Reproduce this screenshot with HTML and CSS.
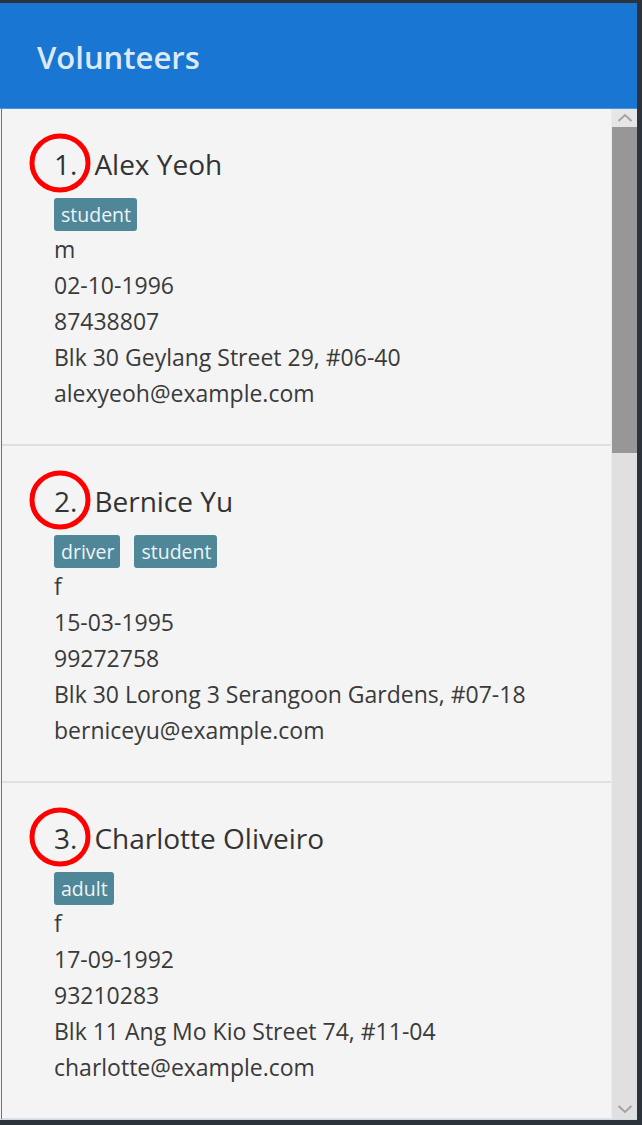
FILE: index.html
```html
<!DOCTYPE html>
<html lang="en">
<head>
<meta charset="utf-8">
<title>Volunteers</title>
<link rel="stylesheet" href="styles.css">
</head>
<body>
<div class="app">
  <header class="header"><h1 class="title">Volunteers</h1></header>
  <div class="body">
    <div class="list">
      <div class="card">
        <svg class="mark" viewBox="0 0 62 60" width="62" height="60"><ellipse cx="31" cy="30" rx="28" ry="27" fill="none" stroke="#f00" stroke-width="5"/></svg>
        <div class="name-row"><span class="idx">1.</span><span class="name">Alex Yeoh</span></div>
        <div class="tags"><span class="tag">student</span></div>
        <div class="line">m</div>
        <div class="line">02-10-1996</div>
        <div class="line">87438807</div>
        <div class="line">Blk 30 Geylang Street 29, #06-40</div>
        <div class="line">alexyeoh@example.com</div>
      </div>
      <div class="card">
        <svg class="mark" viewBox="0 0 62 60" width="62" height="60"><ellipse cx="31" cy="30" rx="28" ry="27" fill="none" stroke="#f00" stroke-width="5"/></svg>
        <div class="name-row"><span class="idx">2.</span><span class="name">Bernice Yu</span></div>
        <div class="tags"><span class="tag">driver</span><span class="tag">student</span></div>
        <div class="line">f</div>
        <div class="line">15-03-1995</div>
        <div class="line">99272758</div>
        <div class="line">Blk 30 Lorong 3 Serangoon Gardens, #07-18</div>
        <div class="line">berniceyu@example.com</div>
      </div>
      <div class="card">
        <svg class="mark" viewBox="0 0 62 60" width="62" height="60"><ellipse cx="31" cy="30" rx="28" ry="27" fill="none" stroke="#f00" stroke-width="5"/></svg>
        <div class="name-row"><span class="idx">3.</span><span class="name">Charlotte Oliveiro</span></div>
        <div class="tags"><span class="tag">adult</span></div>
        <div class="line">f</div>
        <div class="line">17-09-1992</div>
        <div class="line">93210283</div>
        <div class="line">Blk 11 Ang Mo Kio Street 74, #11-04</div>
        <div class="line">charlotte@example.com</div>
      </div>
    </div>
    <div class="scrollbar">
      <div class="sb-btn"><svg width="16" height="10" viewBox="0 0 16 10"><polyline points="1.5,8 8,2 14.5,8" fill="none" stroke="#a3a3a3" stroke-width="2"/></svg></div>
      <div class="sb-track"><div class="sb-thumb"></div></div>
      <div class="sb-btn down"><svg width="16" height="10" viewBox="0 0 16 10"><polyline points="1.5,2 8,8 14.5,2" fill="none" stroke="#a3a3a3" stroke-width="2"/></svg></div>
    </div>
  </div>
</div>
</body>
</html>
```
FILE: styles.css
```css
html, body {
  margin: 0;
  padding: 0;
  background: #2c333b;
}
body {
  width: 642px;
  height: 1125px;
  overflow: hidden;
  font-family: "Open Sans", "Noto Sans", sans-serif;
}
.app {
  margin-top: 3px;
  width: 637px;
  display: flex;
  flex-direction: column;
}
.header {
  height: 105px;
  background: #1976d2;
  border-bottom: 1px solid #4c93dd;
  display: flex;
  align-items: center;
  padding-left: 37px;
}
.title {
  margin: 0;
  padding-top: 2px;
  font-size: 31px;
  font-weight: 600;
  color: #dce9f6;
}
.body {
  height: 1010px;
  display: flex;
  background: #f4f4f4;
  border-bottom: 1px solid #cddbe8;
  box-shadow: inset 1px 0 #f4f4f4, inset 2px 0 #2f7fd6;
  overflow: hidden;
}
.list {
  flex: 1;
  overflow: hidden;
  padding-left: 2px;
}
.card {
  position: relative;
  padding: 37px 0 33px 52px;
  border-bottom: 2px solid #e0e0e0;
  color: #3a3a3a;
}
.mark {
  position: absolute;
  left: 27px;
  top: 24px;
}
.name-row {
  display: flex;
  gap: 17px;
  font-size: 28px;
  line-height: 36px;
  height: 36px;
  color: #333;
}
.tags {
  display: flex;
  gap: 14px;
  margin-top: 16px;
  height: 33px;
}
.tag {
  background: #4f8799;
  color: #eef4f6;
  font-size: 19.5px;
  line-height: 33px;
  height: 33px;
  padding: 0 6px 0 7px;
  border-radius: 3px;
}
.line {
  font-size: 23px;
  line-height: 36px;
  height: 36px;
  white-space: nowrap;
}
.scrollbar {
  width: 25px;
  display: flex;
  flex-direction: column;
  background: #e0e0e0;
  border-left: 1px solid #ececec;
}
.sb-btn {
  height: 18px;
  display: flex;
  align-items: center;
  justify-content: center;
  background: #e6e6e6;
}
.sb-btn.down {
  height: 20px;
  background: #e0e0e0;
}
.sb-track {
  flex: 1;
}
.sb-thumb {
  height: 326px;
  background: #979797;
}
```
